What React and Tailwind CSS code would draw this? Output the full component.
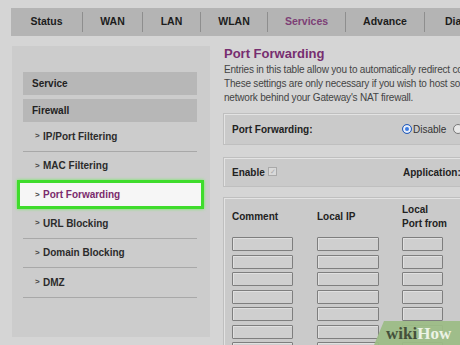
import React from "react";

const tabs = [
  { label: "Status", w: "w-[72px]" },
  { label: "WAN", w: "w-[60px]" },
  { label: "LAN", w: "w-[58px]" },
  { label: "WLAN", w: "w-[67px]" },
  { label: "Services", w: "w-[78px]", active: true },
  { label: "Advance", w: "w-[79px]" },
  { label: "Diagnosis", w: "w-[90px]" },
];

const firewallItems = [
  "IP/Port Filtering",
  "MAC Filtering",
  "Port Forwarding",
  "URL Blocking",
  "Domain Blocking",
  "DMZ",
];

const rows = [0, 1, 2, 3, 4, 5, 6];

const Box = ({ className = "", children }) => (
  <div
    className={`border border-[#bfbfbf] shadow-[inset_1px_1px_0_#e3e3e3] bg-[#cacaca] ${className}`}
  >
    {children}
  </div>
);

const Input = ({ w }) => (
  <div className={`${w} h-[14px] shrink-0 border border-[#7e7e7e] bg-[#cfcfcf] rounded-[1px] shadow-[inset_1px_1px_0_#e0e0e0]`} />
);

export default function App() {
  return (
    <div className="relative w-[460px] h-[345px] overflow-hidden bg-[#d5d5d5] font-['Liberation_Sans',Arial,sans-serif] text-[10px] text-[#222]">
      {/* logo remnant */}
      <div className="h-[8px] overflow-hidden pl-[56px]">
        <div className="-mt-[13px] text-[16px] leading-[16px] font-bold tracking-[7px] text-[#3a3a3a]">ZXHN</div>
      </div>

      {/* top nav */}
      <div className="ml-[11px] w-[620px] h-[28px] bg-[#b4b4b4] flex items-center">
        {tabs.map((t, i) => (
          <div key={t.label} className={`${t.w} h-full flex items-center shrink-0`}>
            <span
              className={`flex-1 text-center font-bold text-[10.5px] ${t.active ? "text-[#7d3f76]" : "text-[#1c1c1c]"}`}
            >
              {t.label}
            </span>
            {i < tabs.length - 1 && <span className="w-px h-[20px] bg-[#8e8e8e]" />}
          </div>
        ))}
      </div>

      <div className="flex items-start">
        {/* left menu */}
        <div className="ml-[12px] mt-[10px] w-[198px] h-[291px] bg-[#cccccc] pt-[26px] pl-[11px] pr-[13px] shrink-0">
          <div className="h-[23px] bg-[#b7b7b7] flex items-center pl-[9px] font-bold text-[#222]">Service</div>
          <div className="mt-[4px] h-[23px] bg-[#b7b7b7] flex items-center pl-[9px] font-bold text-[#222]">Firewall</div>
          {firewallItems.map((item) =>
            item === "Port Forwarding" ? (
              <div
                key={item}
                className="-ml-[6px] -mt-[1px] w-[187px] h-[29px] border-[3px] border-[#3fdc2c] bg-[#f6f6f6] shadow-[0_0_3px_#6ef05c] flex items-center pl-[15px] font-bold text-[#7a2a6c]"
              >
                <span className="w-[8px] text-[8px] text-[#444]">&gt;</span>
                {item}
              </div>
            ) : (
              <div
                key={item}
                className="h-[29.5px] border-b border-[#a8a8a8] flex items-center pl-[12px] font-bold text-[#2b2b2b]"
              >
                <span className="w-[8px] text-[8px] text-[#444]">&gt;</span>
                {item}
              </div>
            )
          )}
        </div>

        {/* right content */}
        <div className="ml-[13px] pt-[10px] w-[300px] shrink-0">
          <h1 className="ml-[1px] text-[13px] leading-[16px] font-bold text-[#772e70]">Port Forwarding</h1>
          <div className="ml-[1px] mt-[1px] leading-[14px] tracking-[-0.2px] text-[#444] whitespace-nowrap">
            <p>Entries in this table allow you to automatically redirect common network services</p>
            <p>These settings are only necessary if you wish to host some sort of server</p>
            <p>network behind your Gateway's NAT firewall.</p>
          </div>

          <Box className="mt-[8px] h-[32px] flex items-center pl-[8px]">
            <span className="font-bold w-[170px]">Port Forwarding:</span>
            <span className="w-[10px] h-[10px] rounded-full border border-[#2a5fb8] bg-[#3b7be0] shadow-[inset_0_0_0_2px_#e8eefa]" />
            <span className="ml-[1px] text-[#333] w-[40px]">Disable</span>
            <span className="w-[10px] h-[10px] rounded-full border border-[#777] bg-[#e8e8e8]" />
            <span className="ml-[1px] text-[#333]">Enable</span>
          </Box>

          <Box className="mt-[12px] h-[30px] flex items-center pl-[8px]">
            <span className="font-bold w-[36px]">Enable</span>
            <span className="-mt-[2px] w-[9px] h-[9px] border border-[#a9a9a9] bg-[#d9d9d9] text-[7px] leading-[7px] text-[#aaa] text-center">✓</span>
            <span className="ml-[126px] font-bold">Application:</span>
          </Box>

          <Box className="mt-[10px] h-[160px] pt-[5px] pl-[8px]">
            <div className="h-[28px] flex items-center font-bold leading-[14px]">
              <span className="w-[85px] shrink-0">Comment</span>
              <span className="w-[85px] shrink-0">Local IP</span>
              <span className="w-[58px] shrink-0">Local<br />Port from</span>
              <span className="shrink-0">Local<br />Port to</span>
            </div>
            <div className="mt-[6px] flex flex-col gap-[3.5px]">
              {rows.map((r) => (
                <div key={r} className="flex">
                  <div className="w-[85px] shrink-0"><Input w="w-[61px]" /></div>
                  <div className="w-[85px] shrink-0"><Input w="w-[62px]" /></div>
                  <div className="w-[58px] shrink-0"><Input w="w-[41px]" /></div>
                  <Input w="w-[41px]" />
                </div>
              ))}
            </div>
          </Box>
        </div>
      </div>

      {/* watermark */}
      <div className="absolute right-0 bottom-0 w-[86px] h-[24px] bg-[#9cbc86] opacity-95 [clip-path:polygon(10px_0,100%_0,100%_100%,0_100%)] flex items-center pl-[12px] font-['Liberation_Serif',serif] font-bold text-[17px] leading-[17px]">
        <span className="text-[#3d4a33]">wiki</span>
        <span className="text-[#eef5e6]">How</span>
      </div>
    </div>
  );
}
